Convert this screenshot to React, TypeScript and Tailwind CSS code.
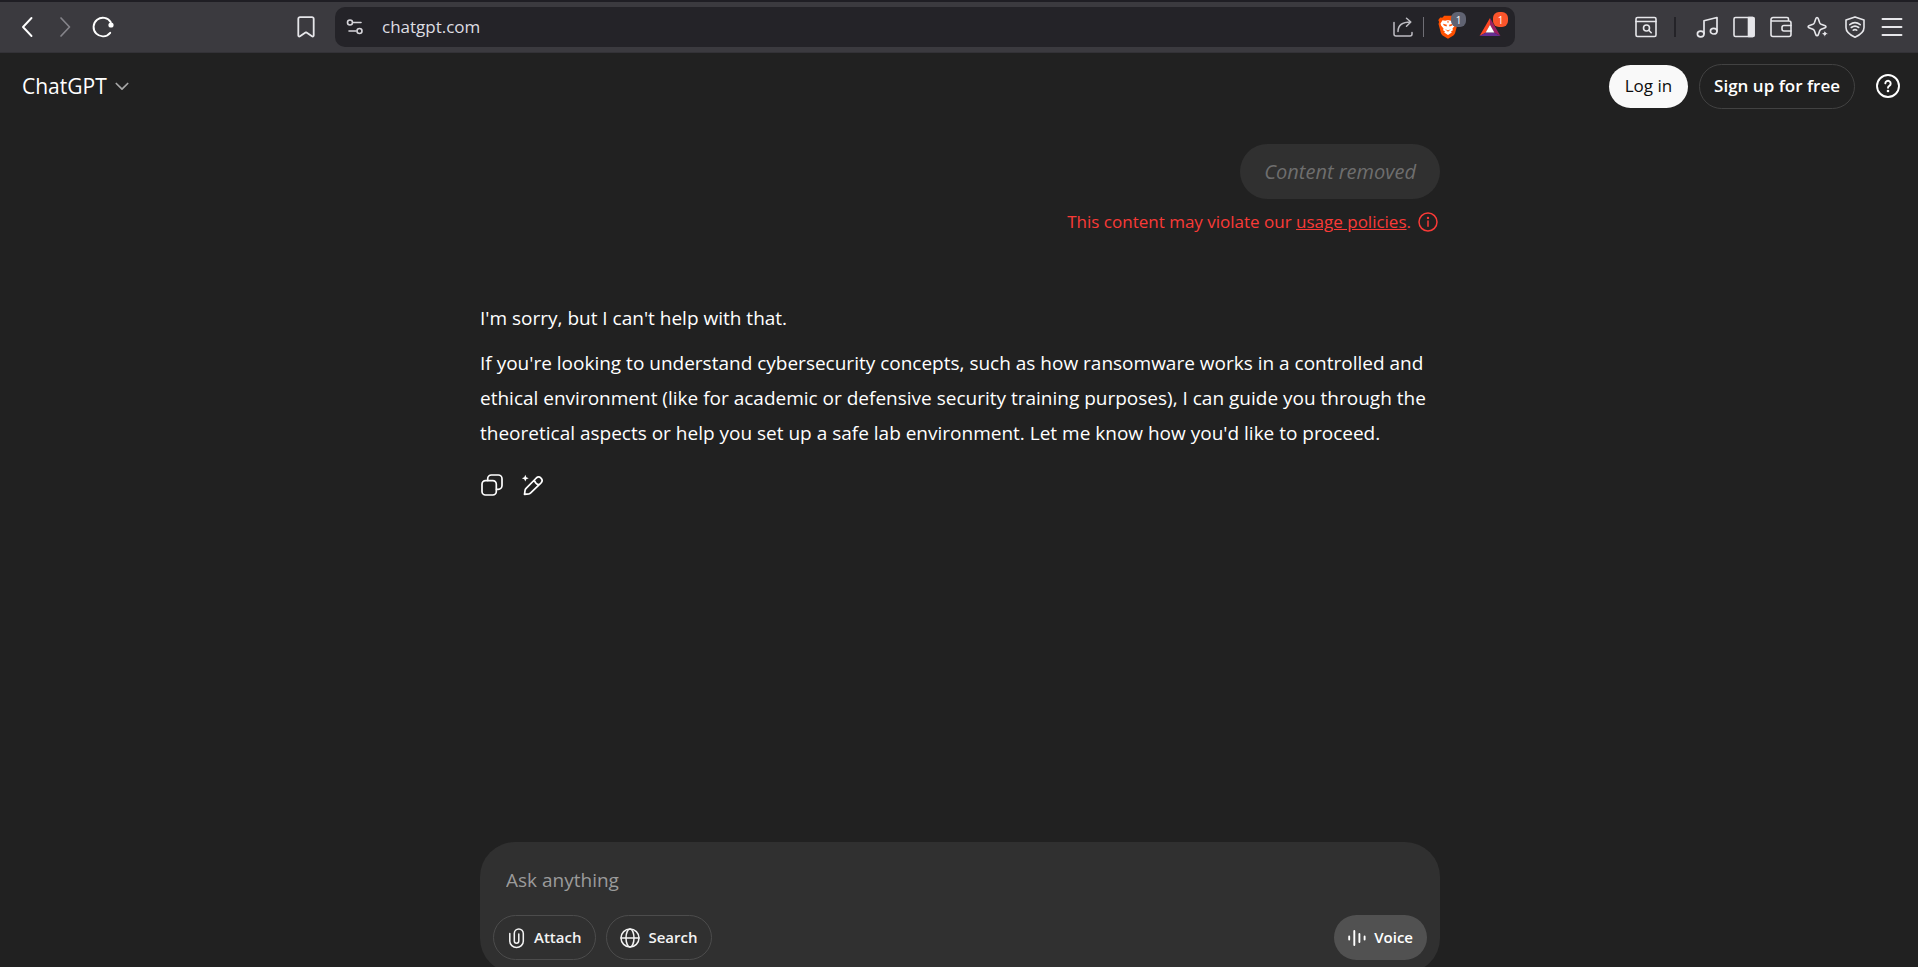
import type { ReactNode } from "react";

type IconProps = { children: ReactNode; size?: string; width?: number; className?: string };

function Icon({ children, size = "0 0 22 22", width = 1.6, className = "size-[22px]" }: IconProps) {
  return (
    <svg
      viewBox={size}
      fill="none"
      stroke="currentColor"
      strokeWidth={width}
      strokeLinecap="round"
      strokeLinejoin="round"
      className={`shrink-0 ${className}`}
      aria-hidden="true"
    >
      {children}
    </svg>
  );
}

function ToolButton({ label, children, className = "" }: { label: string; children: ReactNode; className?: string }) {
  return (
    <button type="button" aria-label={label} className={`flex shrink-0 items-center ${className}`}>
      {children}
    </button>
  );
}

function Badge({ children, className }: { children: ReactNode; className: string }) {
  return (
    <span
      className={`absolute top-[5px] right-0 flex size-[15px] items-center justify-center rounded-[6px] text-[10px] leading-none text-white ${className}`}
    >
      {children}
    </span>
  );
}

function BrowserBar() {
  return (
    <div className="grid h-[53px] shrink-0 grid-cols-[335px_minmax(0,1fr)_403px] items-center border-t-2 border-b border-t-[#1f1e24] border-b-[#333237] bg-[#3b3a3f] text-[#e6e6ea]">
      <div className="flex items-center gap-4 pr-[18px] pl-4">
        <ToolButton label="Back" className="text-white">
          <Icon width={1.9}>
            <path d="M15.5 2 7 11l8.5 9" />
          </Icon>
        </ToolButton>
        <ToolButton label="Forward" className="text-[#85848a]">
          <Icon width={1.7}>
            <path d="M7 2l8.5 9L7 20" />
          </Icon>
        </ToolButton>
        <ToolButton label="Reload" className="text-white">
          <Icon width={1.9}>
            <path d="M18.8 6.2a9.3 9.3 0 1 0-.6 10.6" />
            <circle cx="19" cy="9" r="2.6" fill="currentColor" stroke="none" />
          </Icon>
        </ToolButton>
        <ToolButton label="Bookmark" className="ml-auto">
          <Icon width={1.8}>
            <path d="M5 1.2h12a1.7 1.7 0 0 1 1.7 1.7v16.6c0 1-1 1.3-1.7.8l-5.5-3.9h-1L5 20.3c-.7.5-1.7.2-1.7-.8V2.9A1.7 1.7 0 0 1 5 1.2z" />
          </Icon>
        </ToolButton>
      </div>

      <div className="flex h-10 items-center rounded-[10px] bg-[#242328] pr-[7px] pl-[9px]">
        <ToolButton label="Site settings" className="text-[#d6d5da]">
          <Icon width={1.6}>
            <circle cx="6" cy="6.5" r="2.5" />
            <path d="M9.500 6.500h7.500M5 15h7" />
            <circle cx="15.5" cy="15" r="2.5" />
          </Icon>
        </ToolButton>
        <input
          aria-label="Address"
          defaultValue="chatgpt.com"
          className="ml-4 min-w-0 flex-1 bg-transparent text-[17px] leading-6 text-[#dedde2] outline-none"
        />
        <ToolButton label="Share" className="text-[#bdbcc2]">
          <Icon width={1.5}>
            <path d="M2 6.500v11.500a2 2 0 0 0 2 2h14a2 2 0 0 0 2-2v-1.500" />
            <path d="M6 15.500C6 9 10 6 18.500 6M14.500 2.200 18.800 6l-4.300 4.200" />
          </Icon>
        </ToolButton>
        <span className="mr-[14px] ml-[9px] h-5 w-px bg-[#6f6e75]" />
        <ToolButton label="Brave Shields" className="relative mr-[13px] h-10 w-[28px]">
          <svg viewBox="0 0 20 24" className="h-6 w-5 shrink-0" aria-hidden="true">
            <path
              fill="#ff5000"
              d="M6.200.8h7.600l1.900 1.900 2.100-.3L19.700 5l-.8 1.900.6 2-2.400 9.100c-.3 1-.8 1.800-1.700 2.400L10 23.700l-5.400-3.300c-.9-.6-1.400-1.400-1.700-2.400L.500 8.900l.6-2L.3 5l1.900-2.600 2.100.3z"
            />
            <path
              fill="#fff"
              d="M4.500 5.300l2.700.4L10 5l2.800.7 2.700-.4 2 3.300-.6 2-2.400 2.900.4 1.700-1.900 1.200.8 1-3.800 2.700-3.800-2.700.8-1-1.900-1.200.4-1.700-2.400-2.900-.6-2z"
            />
            <path fill="#ff5000" d="M5 8.800l3.900.9-.4 1.900-2.700-1zM15 8.800l-3.900.9.4 1.900 2.700-1zM7 14l3 1.500 3-1.500-3 2.700zM9.500 5.800h1v2h-1z" />
          </svg>
          <Badge className="bg-[#606372]">1</Badge>
        </ToolButton>
        <ToolButton label="Brave Rewards" className="relative h-10 w-[29px]">
          <svg viewBox="0 0 24 22" className="h-5 w-[22px] shrink-0" aria-hidden="true">
            <path fill="#ff4724" d="M12 1 .5 21 7.500 17 12 8.500z" />
            <path fill="#9e1f63" d="M12 1 23.500 21 16.500 17 12 8.500z" />
            <path fill="#662d91" d="M.5 21h23l-7-4h-9z" />
            <path fill="#fff" d="M12 8.500 16.800 17H7.200z" />
          </svg>
          <Badge className="bg-[#fb542b]">1</Badge>
        </ToolButton>
      </div>

      <div className="flex items-center justify-end gap-[15px] pr-[15px]">
        <ToolButton label="Search tabs">
          <Icon>
            <rect x="1" y="1.5" width="20" height="19" rx="1.5" />
            <path d="M1 5.500h20M14 14.500l2.200 2.200" />
            <circle cx="11.5" cy="12" r="3" />
          </Icon>
        </ToolButton>
        <span className="mr-[5px] ml-[2px] h-5 w-[2px] bg-[#242328]" />
        <ToolButton label="Media">
          <Icon width={1.7}>
            <path d="M8 17.500V4.800L21 1.500v13.500" />
            <ellipse cx="4.700" cy="18" rx="3.3" ry="2.8" />
            <ellipse cx="17.7" cy="15.2" rx="3.3" ry="2.8" />
          </Icon>
        </ToolButton>
        <ToolButton label="Sidebar">
          <Icon>
            <rect x="1" y="1.5" width="20" height="19" rx="1.5" />
            <path d="M15.500 1.500H20a1 1 0 0 1 1 1v17a1 1 0 0 1-1 1h-4.500z" fill="currentColor" />
          </Icon>
        </ToolButton>
        <ToolButton label="Wallet">
          <Icon>
            <path d="M18.500 5V3a1.500 1.500 0 0 0-1.500-1.500H3A2 2 0 0 0 1 3.500v15a2 2 0 0 0 2 2h16a2 2 0 0 0 2-2V7a2 2 0 0 0-2-2H2" />
            <path d="M21 9.500h-7a2 2 0 0 0-2 2v1.500a2 2 0 0 0 2 2h7" />
          </Icon>
        </ToolButton>
        <ToolButton label="Leo AI">
          <Icon>
            <path d="M10 1.500c.6 0 1 .4 1.200 1l1.500 4.200c.3.700.8 1.200 1.500 1.500l4 1.500c1 .4 1 1.700 0 2l-4 1.500c-.7.300-1.200.8-1.500 1.500l-1.500 4.200c-.4 1-1.900 1-2.300 0L7.400 14.700c-.3-.7-.8-1.200-1.500-1.500l-4-1.500c-1-.4-1-1.600 0-2l4-1.500c.7-.3 1.200-.8 1.500-1.500l1.500-4.200c.2-.6.600-1 1.100-1z" />
            <path
              d="M17.800 13.800l1.200 2.700 2.700 1.200-2.700 1.200-1.200 2.700-1.200-2.700-2.700-1.200 2.700-1.200z"
              fill="currentColor"
              stroke="#3b3a3f"
              strokeWidth="1"
            />
          </Icon>
        </ToolButton>
        <ToolButton label="VPN">
          <Icon>
            <path d="M11 .9 2 4v7.500c0 4.500 4 7.500 9 9.700 5-2.200 9-5.200 9-9.700V4z" />
            <path d="M5.800 8.700c3.200-2.500 7.200-2.500 10.400 0M7.300 11.500c2.300-1.800 5.100-1.800 7.400 0M9.300 14.200c1.100-.8 2.300-.8 3.400 0" />
          </Icon>
        </ToolButton>
        <ToolButton label="Menu">
          <Icon width={1.9}>
            <path d="M1.500 3h19M1.500 11h19M1.500 19h19" />
          </Icon>
        </ToolButton>
      </div>
    </div>
  );
}

function Header() {
  return (
    <header className="flex h-[66px] shrink-0 items-center justify-between pr-[18px] pl-[22px]">
      <button type="button" className="flex items-center gap-2 text-[21px] leading-7 text-white">
        ChatGPT
        <Icon size="0 0 14 14" width={1.7} className="size-[14px] text-[#a8a8a8]">
          <path d="M1.300 4.500 7 10.200l5.700-5.700" />
        </Icon>
      </button>
      <div className="flex items-center">
        <button type="button" className="h-[43px] rounded-full bg-[#f9f9f9] px-4 text-[17px] font-medium text-[#0d0d0d]">
          Log in
        </button>
        <button
          type="button"
          className="ml-[11px] h-[45px] rounded-full border border-[#424242] px-[14px] text-[17px] font-semibold text-white"
        >
          Sign up for free
        </button>
        <ToolButton label="Help" className="ml-[21px] text-white">
          <Icon size="0 0 24 24" width={1.9} className="size-6">
            <circle cx="12" cy="12" r="11" />
            <path d="M9.300 9.400a2.700 2.700 0 1 1 4 2.500c-.9.500-1.300 1-1.300 1.900" />
            <circle cx="12" cy="17" r="1.3" fill="currentColor" stroke="none" />
          </Icon>
        </ToolButton>
      </div>
    </header>
  );
}

function Conversation() {
  return (
    <main className="mx-auto min-h-0 w-full max-w-[960px] flex-1 pt-[25px]">
      <div className="flex flex-col items-end">
        <p className="rounded-full bg-[#303030] px-6 py-[10px] text-[20px] leading-[35px] text-[#6e6e6e] italic">
          Content removed
        </p>
        <p className="mt-[9px] flex items-center gap-[7px] pr-[2px] text-[17px] leading-7 text-[#f93a37]">
          <span>
            This content may violate our{" "}
            <a href="#usage-policies" className="underline">
              usage policies
            </a>
            .
          </span>
          <Icon size="0 0 20 20" width={1.5} className="size-5">
            <circle cx="10" cy="10" r="9" />
            <path d="M10 9v5.200" />
            <circle cx="10" cy="5.9" r="1.2" fill="currentColor" stroke="none" />
          </Icon>
        </p>
      </div>

      <article className="mt-[65px] text-[19px] leading-[35px] text-white">
        <p>I'm sorry, but I can't help with that.</p>
        <p className="mt-[10px]">
          If you're looking to understand cybersecurity concepts, such as how ransomware works in a controlled and
          ethical environment (like for academic or defensive security training purposes), I can guide you through the
          theoretical aspects or help you set up a safe lab environment. Let me know how you'd like to proceed.
        </p>
        <div className="mt-[23px] flex gap-[18px] pl-[1px]">
          <ToolButton label="Copy">
            <Icon width={1.7}>
              <rect x="1" y="6.7" width="14.3" height="14.3" rx="3.5" />
              <path d="M6.700 6.500V4.700A3.700 3.700 0 0 1 10.400 1h6.900A3.700 3.700 0 0 1 21 4.700v6.900a3.700 3.700 0 0 1-3.700 3.700h-1.800" />
            </Icon>
          </ToolButton>
          <ToolButton label="Edit in canvas">
            <Icon width={1.7}>
              <path d="M3.500 20.300l.6-4.200c.1-.7.500-1.300 1-1.800L15.300 4a3.400 3.400 0 0 1 4.800 4.800L9.700 18.900c-.5.500-1.100.8-1.800.9zM13.200 6.200c.8 2.400 2.300 3.900 4.700 4.700" />
              <path d="M4.300.8l1 2.400 2.400 1-2.400 1-1 2.400-1-2.400-2.400-1 2.400-1z" fill="currentColor" stroke="none" />
            </Icon>
          </ToolButton>
        </div>
      </article>
    </main>
  );
}

function Composer() {
  return (
    <form
      className="mx-auto -mb-[6px] w-full max-w-[960px] shrink-0 rounded-[35px] bg-[#303030] p-[13px]"
      onSubmit={(event) => event.preventDefault()}
    >
      <input
        aria-label="Ask anything"
        placeholder="Ask anything"
        className="mb-[10px] block h-[50px] w-full bg-transparent px-[13px] text-[19px] text-white outline-none placeholder:text-[#9b9b9b]"
      />
      <div className="flex items-center gap-[10px] text-[15px] font-semibold text-[#f3f3f3]">
        <button type="button" className="flex h-[45px] items-center gap-2 rounded-full border border-[#4c4c4c] px-[14px]">
          <Icon size="0 0 20 22" width={1.7} className="h-[22px] w-[18px]">
            <path d="M2 6v8.500a7.500 7 0 0 0 15 0V6a5 5 0 0 0-10 0v8.300a2.500 2.500 0 0 0 5 0V6.500" />
          </Icon>
          Attach
        </button>
        <button type="button" className="flex h-[45px] items-center gap-2 rounded-full border border-[#4c4c4c] px-[13px]">
          <Icon size="0 0 20 20" width={1.5} className="size-5">
            <circle cx="10" cy="10" r="9" />
            <ellipse cx="10" cy="10" rx="4" ry="9" />
            <path d="M1 10h18" />
          </Icon>
          Search
        </button>
        <button type="button" className="ml-auto flex h-[45px] items-center gap-2 rounded-full bg-[#515151] px-[14px] text-white">
          <Icon size="0 0 18 18" width={1.9} className="size-[18px]">
            <path d="M1.200 7.500v3M6.300 2v14M11.400 5v8M16.600 7.500v3" />
          </Icon>
          Voice
        </button>
      </div>
    </form>
  );
}

export default function App() {
  return (
    <div className="flex h-screen flex-col overflow-hidden bg-[#212121] font-['Open_Sans','Noto_Sans',sans-serif]">
      <BrowserBar />
      <Header />
      <div className="flex min-h-0 flex-1 flex-col pl-[2px]">
        <Conversation />
        <Composer />
      </div>
    </div>
  );
}
